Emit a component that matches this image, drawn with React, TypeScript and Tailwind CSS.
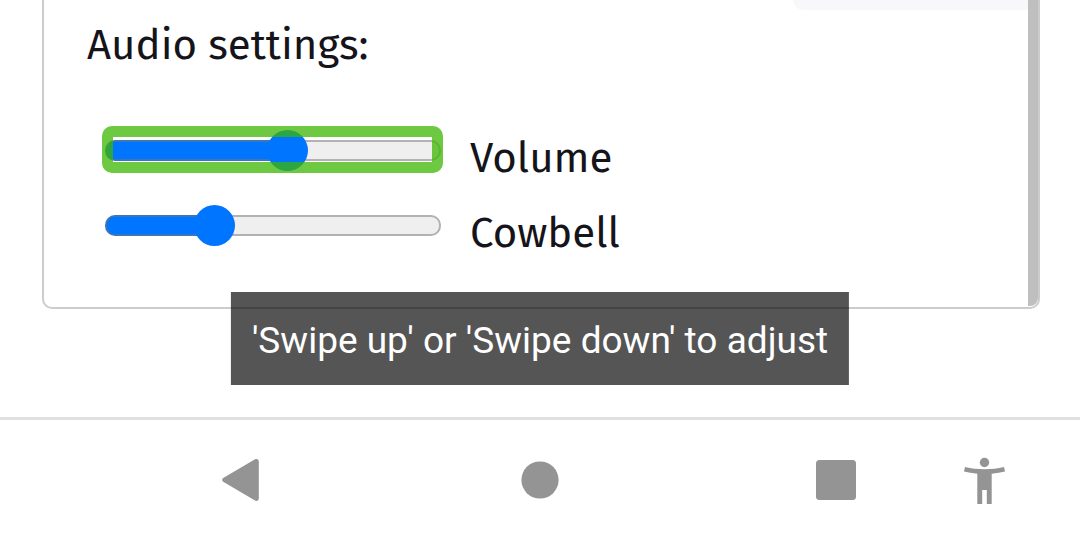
import { useState } from "react";

type SliderRowProps = {
  id: string;
  label: string;
  initial: number;
  focused?: boolean;
};

function SliderRow({ id, label, initial, focused = false }: SliderRowProps) {
  const [value, setValue] = useState(initial);

  return (
    <div className="flex h-[75px] items-center gap-[29px]">
      <div className="relative flex w-[336px] shrink-0">
        <input
          id={id}
          type="range"
          min={0}
          max={100}
          value={value}
          onChange={(event) => setValue(Number(event.target.value))}
          style={{ backgroundSize: `${value}% 100%` }}
          className="m-0 h-[21px] w-full appearance-none rounded-[10px] border-2 border-[#76767680] bg-[#efefef] bg-linear-to-r from-[#0075ff] to-[#0075ff] bg-origin-border bg-no-repeat outline-none [&::-webkit-slider-runnable-track]:-mx-[2px] [&::-webkit-slider-thumb]:size-[41px] [&::-webkit-slider-thumb]:appearance-none [&::-webkit-slider-thumb]:rounded-full [&::-webkit-slider-thumb]:bg-[#0075ff]"
        />
        {focused && (
          <span className="pointer-events-none absolute -top-[14px] -right-[2px] -left-[3px] h-[47px] rounded-[10px] border-[11px] border-[#3cb503]/75" />
        )}
      </div>
      <label htmlFor={id} className="pt-[15px] text-[42px] leading-[50px]">
        {label}
      </label>
    </div>
  );
}

export default function App() {
  return (
    <div className="relative flex min-h-screen flex-col bg-white text-[#15141a]">
      <main className="flex-1 pr-10 pl-[42px]">
        <section className="relative rounded-b-[10px] border-2 border-t-0 border-[#cccccc] pb-11 font-['Fira_Sans','Noto_Sans',sans-serif]">
          <div className="flex justify-end">
            <div className="h-[10px] w-[245px] rounded-bl-[10px] bg-[#f8f8fb]" />
          </div>
          <h2 className="mt-[10px] pl-[43px] text-[42px] leading-[50px]">Audio settings:</h2>
          <div className="mt-[43px] pl-[61px]">
            <SliderRow id="volume" label="Volume" initial={55} focused />
            <SliderRow id="cowbell" label="Cowbell" initial={30} />
          </div>
          <div className="absolute top-0 right-0 bottom-px w-[10px] rounded-br-lg bg-[#bfbfbf]" />
        </section>
      </main>

      <div
        role="status"
        className="absolute bottom-[158px] left-1/2 -translate-x-1/2 bg-[#000000aa] px-[21px] pt-6 pb-5 font-['Roboto',sans-serif] text-[37px] leading-[49px] whitespace-nowrap text-white"
      >
        'Swipe up' or 'Swipe down' to adjust
      </div>

      <nav className="grid h-[126px] grid-cols-[300fr_300fr_166fr_149fr] items-center border-t-[3px] border-[#e0e0e0] pr-[75px] pb-[3px] pl-[90px] text-[#949494]">
        <button type="button" aria-label="Back" className="justify-self-center">
          <svg width="38" height="44" viewBox="0 0 38 44" fill="currentColor">
            <path d="M2.2 20.1 34 1.3C35.8 .3 37.8 1.4 37.8 3.4V40.4C37.8 42.4 35.8 43.5 34 42.5L2.2 23.7C.8 22.9 .8 20.9 2.2 20.1Z" />
          </svg>
        </button>
        <button type="button" aria-label="Home" className="justify-self-center">
          <svg width="38" height="38" viewBox="0 0 38 38" fill="currentColor">
            <circle cx="19" cy="19" r="18.6" />
          </svg>
        </button>
        <button type="button" aria-label="Recent apps" className="justify-self-end">
          <svg width="40" height="40" viewBox="0 0 40 40" fill="currentColor">
            <rect width="40" height="40" rx="3.5" />
          </svg>
        </button>
        <button type="button" aria-label="Accessibility" className="justify-self-end">
          <svg width="41" height="47" viewBox="0 0 41 47" fill="currentColor">
            <circle cx="20.5" cy="5.5" r="4.7" />
            <path d="M1 10C13 13 28 13 40 10L41 14.5Q35 16 27.7 16.7V47H22.8V33H18.2V47H13.3V16.7Q6 16 0 14.5Z" />
          </svg>
        </button>
      </nav>
    </div>
  );
}
